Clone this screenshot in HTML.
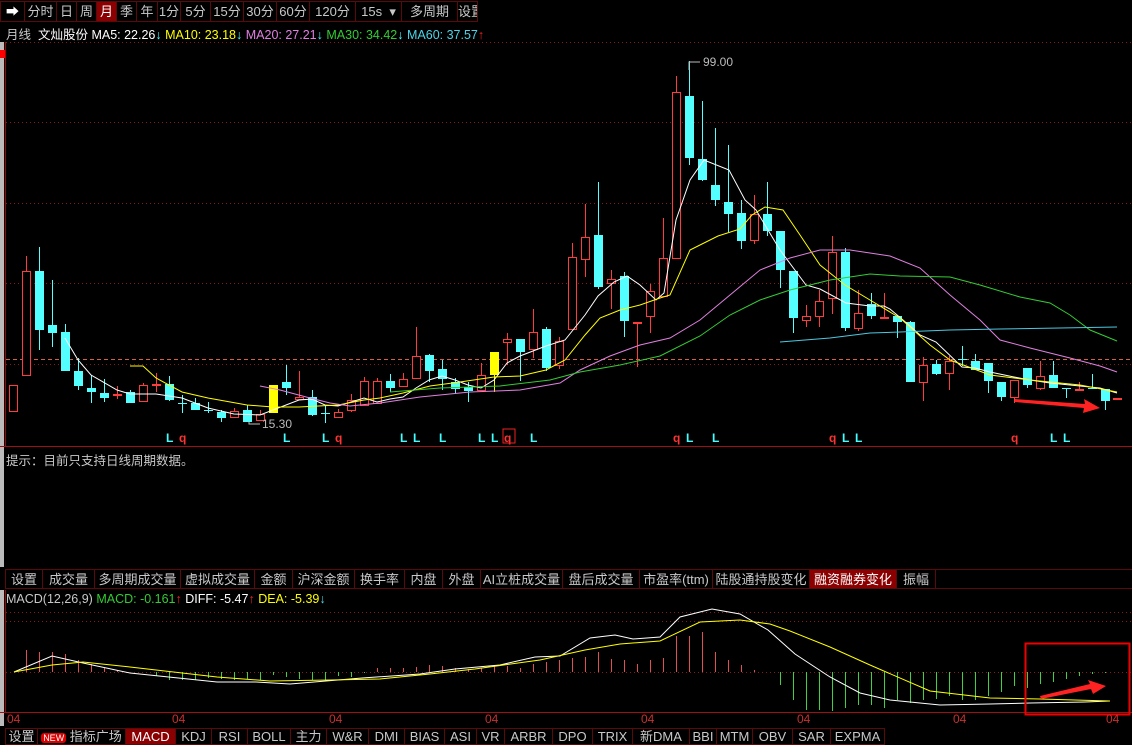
<!DOCTYPE html>
<html><head><meta charset="utf-8">
<style>
*{margin:0;padding:0;box-sizing:border-box}
body{width:1132px;height:745px;background:#000;overflow:hidden;position:relative;font-family:"Liberation Sans","Noto Sans CJK SC",sans-serif;font-size:13px;color:#c8c8c8}
.bar{position:absolute;left:0;display:flex;height:20px;line-height:19px}
.bar div{border:1px solid #5a0a0a;border-left:none;text-align:center;white-space:nowrap;overflow:hidden}
.sel{background:#8b0000;color:#fff}
.t{position:absolute;white-space:nowrap}
svg{position:absolute;left:0;top:0}
</style></head><body>
<div class="bar" style="top:1px;height:21px;line-height:20px">
<div style="width:25px;border-left:1px solid #5a0a0a;color:#fff">➡</div><div style="width:32px">分时</div><div style="width:20px">日</div><div style="width:20px">周</div><div style="width:20px" class="sel">月</div><div style="width:20px">季</div><div style="width:21px">年</div><div style="width:23px">1分</div><div style="width:30px">5分</div><div style="width:33px">15分</div><div style="width:33px">30分</div><div style="width:33px">60分</div><div style="width:46px">120分</div><div style="width:46px">15s &nbsp;▾</div><div style="width:56px">多周期</div><div style="width:20px">设置</div>
</div>
<div class="t" style="top:24px;left:6px;font-size:12.5px">月线 <span style="color:#fff">&nbsp;文灿股份</span> <span style="color:#fff">MA5: 22.26</span><span style="color:#4ff">↓</span> <span style="color:#ff0">MA10: 23.18</span><span style="color:#4ff">↓</span> <span style="color:#e080e0">MA20: 27.21</span><span style="color:#4ff">↓</span> <span style="color:#3c3">MA30: 34.42</span><span style="color:#4ff">↓</span> <span style="color:#4cd4e8">MA60: 37.57</span><span style="color:#e22">↑</span></div>
<div class="t" style="top:450px;left:6px;font-size:12.5px">提示：目前只支持日线周期数据。</div>
<div class="bar" style="top:569px">
<div style="width:38px;margin-left:5px;border-left:1px solid #5a0a0a">设置</div><div style="width:52px">成交量</div><div style="width:86px">多周期成交量</div><div style="width:74px">虚拟成交量</div><div style="width:38px">金额</div><div style="width:62px">沪深金额</div><div style="width:50px">换手率</div><div style="width:38px">内盘</div><div style="width:38px">外盘</div><div style="width:82px">AI立桩成交量</div><div style="width:77px">盘后成交量</div><div style="width:73px">市盈率(ttm)</div><div style="width:97px">陆股通持股变化</div><div style="width:87px" class="sel">融资融券变化</div><div style="width:39px">振幅</div><div style="width:196px;border-right:none"></div>
</div>
<div class="t" style="top:592px;left:6px;font-size:12.5px">MACD(12,26,9) <span style="color:#3c3">MACD: -0.161</span><span style="color:#e22">↑</span> <span style="color:#fff">DIFF: -5.47</span><span style="color:#e22">↑</span> <span style="color:#ff0">DEA: -5.39</span><span style="color:#4cd4e8">↓</span></div>
<div class="bar" style="top:728px;height:17px;line-height:16px">
<div style="width:33px;margin-left:5px;border-left:1px solid #5a0a0a">设置</div><div style="width:88px"><span style="background:#d00;color:#fff;font-size:9px;padding:0 2px;border-radius:3px">NEW</span> 指标广场</div><div style="width:50px" class="sel">MACD</div><div style="width:36px">KDJ</div><div style="width:36px">RSI</div><div style="width:43px">BOLL</div><div style="width:36px">主力</div><div style="width:42px">W&amp;R</div><div style="width:36px">DMI</div><div style="width:40px">BIAS</div><div style="width:32px">ASI</div><div style="width:28px">VR</div><div style="width:48px">ARBR</div><div style="width:40px">DPO</div><div style="width:40px">TRIX</div><div style="width:57px">新DMA</div><div style="width:27px">BBI</div><div style="width:36px">MTM</div><div style="width:40px">OBV</div><div style="width:38px">SAR</div><div style="width:54px">EXPMA</div>
</div>
<svg width="1132" height="745" id="s">
<rect x="0" y="42" width="4" height="525" fill="#bbb"/>
<rect x="0" y="590" width="4" height="136" fill="#bbb"/>
<line x1="5.5" y1="42" x2="5.5" y2="447" stroke="#a00"/>
<line x1="5.5" y1="590" x2="5.5" y2="712" stroke="#a00"/>
<rect x="0" y="50" width="5" height="8" fill="#f00"/>
<g stroke="#8b1a1a" stroke-dasharray="1,3">
<line x1="6" y1="42.5" x2="1132" y2="42.5"/><line x1="6" y1="122.5" x2="1132" y2="122.5"/><line x1="6" y1="203.5" x2="1132" y2="203.5"/><line x1="6" y1="283.5" x2="1132" y2="283.5"/><line x1="6" y1="364.5" x2="1132" y2="364.5"/>
<line x1="6" y1="612.5" x2="1132" y2="612.5"/><line x1="6" y1="621.5" x2="1132" y2="621.5"/>
</g>
<line x1="6" y1="359.5" x2="1132" y2="359.5" stroke="#d86040" stroke-dasharray="4,3"/>
<line x1="6" y1="672.5" x2="1132" y2="672.5" stroke="#8b1a1a" stroke-dasharray="1,3"/>
<line x1="0" y1="446.5" x2="1132" y2="446.5" stroke="#a01010"/>
<line x1="0" y1="712.5" x2="1132" y2="712.5" stroke="#a01010"/>
<g id="cd"></g>
<g fill="none" stroke-width="1">
<polyline stroke="#fff" points="65,338 78,360 91,375 117,390 130,394 156,394 182,398 208,408 234,414 260,415 273,410 299,400 312,399 325,405 338,406 351,402 364,398 377,402 390,399 403,397 416,388 429,380 442,376 455,380 468,385 481,388 494,380 507,363 520,356 546,346 565,340 585,315 598,296 614,282 627,276 640,285 656,300 664,293 676,220 690,180 704,160 729,170 745,200 756,210 780,250 806,285 820,289 846,303 870,306 884,306 890,309 903,320 920,335 936,342 962,367 975,368 990,372 1014,377 1030,380 1050,383 1080,386 1100,388 1117,393"/>
<polyline stroke="#ff0" points="130,366 143,366 156,378 182,392 208,398 247,405 273,407 299,407 338,405 364,400 380,398 403,393 430,386 460,382 494,377 520,376 546,370 565,360 585,335 600,318 620,310 640,305 660,298 670,295 690,250 700,245 718,236 740,229 752,215 765,207 783,210 800,235 820,265 845,285 870,300 900,318 930,345 950,360 990,375 1030,380 1080,385 1117,392"/>
<polyline stroke="#e080e0" points="260,386 280,390 310,398 330,403 350,406 380,403 420,397 470,392 520,390 560,383 580,370 610,356 640,345 670,338 700,320 730,295 760,270 790,258 820,250 850,250 890,256 920,268 950,295 980,320 1000,340 1030,348 1070,358 1100,366 1117,372"/>
<polyline stroke="#3c3" points="390,392 440,388 500,386 550,380 580,372 620,365 660,356 700,336 730,315 760,300 790,290 830,280 870,274 900,276 950,277 980,285 1020,297 1050,303 1070,315 1090,330 1117,341"/>
<polyline stroke="#4cc8e0" points="780,342 830,338 870,333 900,332 950,330 1000,329 1060,328 1117,327"/>
</g>
<g fill="#bbb" font-size="12" font-family="Liberation Sans,sans-serif">
<polyline points="689,70 689,62 700,62" stroke="#bbb" fill="none"/><text x="703" y="66">99.00</text>
<polyline points="249,422 249,424 260,424" stroke="#bbb" fill="none"/><text x="262" y="428">15.30</text>
</g>
<g font-size="12" font-weight="bold" font-family="Liberation Sans,sans-serif" id="lq"></g>
<rect x="503" y="429" width="12" height="14" fill="none" stroke="#e22"/>
<polygon points="1015,399 1085,404 1084,399 1100,408 1083,413 1084,408 1015,402" fill="#f22"/>
<g id="hist"></g>
<polyline fill="none" stroke="#fff" points="14,672 52,656 83,663 130,673 217,682 256,682 290,684 362,678 420,674 455,669 500,665 535,657 560,656 590,638 615,635 633,639 660,637 680,617 712,609 740,614 768,630 795,654 830,677 860,693 890,700 940,705 990,704 1030,703 1085,702 1110,701"/>
<polyline fill="none" stroke="#ff0" points="14,672 52,665 83,662 130,667 217,677 270,681 330,680 380,679 430,674 475,669 540,660 585,650 620,644 660,641 700,622 740,620 770,624 790,631 830,647 870,665 930,691 990,698 1040,699 1110,701"/>
<polygon points="1040,696 1090,684 1088,680 1106,686 1093,694 1091,689 1041,699" fill="#f22"/>
<rect x="1025.5" y="643.5" width="104" height="71" fill="none" stroke="#e00" stroke-width="2"/>
<g fill="#c83030" font-size="12" font-family="Liberation Sans,sans-serif">
<text x="7" y="723">04</text><text x="172" y="723">04</text><text x="329" y="723">04</text><text x="485" y="723">04</text><text x="641" y="723">04</text><text x="797" y="723">04</text><text x="953" y="723">04</text><text x="1106" y="723">04</text>
</g>
</svg>
<script>
var C=[[13,'r',385,411,385,411],[26,'r',271,375,256,375],[39,'c',271,330,247,350],[52,'c',325,333,280,347],[65,'c',332,371,324,371],[78,'c',371,386,358,390],[91,'c',388,392,375,403],[104,'c',393,398,379,402],[117,'r',394,395,386,399],[130,'c',392,403,390,403],[143,'r',385,401,383,401],[156,'r',384,385,373,392],[169,'c',384,400,376,401],[182,'c',403,404,395,413],[195,'c',403,410,398,410],[208,'c',410,411,402,413],[221,'c',412,418,410,422],[234,'r',411,417,408,417],[247,'c',410,422,405,422],[260,'r',414,420,410,420],[273,'y',385,413,385,413],[286,'c',382,388,365,395],[299,'r',397,399,371,399],[312,'c',397,415,390,416],[325,'c',413,414,406,423],[338,'r',412,417,409,417],[351,'r',400,410,394,412],[364,'r',381,405,377,405],[377,'r',381,403,378,403],[390,'c',381,388,374,392],[403,'r',379,386,373,386],[416,'r',356,378,327,378],[429,'c',355,371,354,382],[442,'c',369,379,360,390],[455,'c',382,389,378,394],[468,'c',387,391,382,402],[481,'r',375,390,363,390],[494,'y',352,375,352,392],[507,'r',339,342,333,365],[520,'c',339,352,339,381],[533,'r',332,349,309,358],[546,'c',329,368,327,371],[559,'r',341,365,337,369],[572,'r',257,329,243,329],[585,'r',237,259,204,277],[598,'c',235,287,182,289],[611,'r',279,283,270,309],[624,'c',276,321,272,337],[637,'r',322,323,322,367],[650,'r',291,316,284,333],[663,'r',258,296,218,296],[676,'r',92,258,76,258],[689,'c',96,158,61,165],[702,'c',159,180,101,181],[715,'c',185,200,128,206],[728,'c',202,214,145,232],[741,'c',213,241,200,249],[754,'r',214,240,195,244],[767,'c',214,231,182,236],[780,'c',231,270,231,288],[793,'c',271,318,271,333],[806,'r',316,320,305,327],[819,'r',301,316,290,327],[832,'r',252,298,236,314],[845,'c',252,328,248,331],[858,'r',313,328,290,331],[871,'c',304,316,293,319],[884,'r',317,318,293,318],[897,'c',316,322,315,338],[910,'c',322,382,321,382],[923,'r',365,382,357,401],[936,'c',364,374,360,375],[949,'r',361,373,356,390],[962,'c',359,360,346,366],[975,'c',361,370,354,370],[988,'c',363,381,363,393],[1001,'c',382,397,382,401],[1014,'r',380,397,380,403],[1027,'c',368,385,368,388],[1040,'r',376,388,361,390],[1053,'c',375,388,361,388],[1066,'c',388,389,388,398],[1079,'r',389,390,382,390],[1092,'c',388,389,374,389],[1105,'c',389,401,389,410],[1117,'r',398,399,398,399]];
var h='';C.forEach(function(c){var x=c[0],col=c[1]=='r'?'#ff3c3c':(c[1]=='y'?'#ff0':'#54ffff');
h+='<line x1="'+(x+.5)+'" y1="'+c[4]+'" x2="'+(x+.5)+'" y2="'+c[5]+'" stroke="'+col+'"/>';
var hh=Math.max(1,c[3]-c[2]);
if(c[1]=='r')h+='<rect x="'+(x-3.5)+'" y="'+(c[2]+.5)+'" width="8" height="'+hh+'" fill="#000" stroke="'+col+'"/>';
else h+='<rect x="'+(x-4)+'" y="'+c[2]+'" width="9" height="'+hh+'" fill="'+col+'"/>';});
document.getElementById('cd').innerHTML=h;
var L=[[169,'L'],[182,'q'],[286,'L'],[325,'L'],[338,'q'],[403,'L'],[416,'L'],[442,'L'],[481,'L'],[494,'L'],[507,'q'],[533,'L'],[676,'q'],[689,'L'],[715,'L'],[832,'q'],[845,'L'],[858,'L'],[1014,'q'],[1053,'L'],[1066,'L']];
h='';L.forEach(function(l){h+='<text x="'+(l[0]-3)+'" y="442" fill="'+(l[1]=='q'?'#f33':'#4ff')+'">'+l[1]+'</text>';});
document.getElementById('lq').innerHTML=h;
var H=[[26,650],[39,652],[52,652],[65,654],[78,660],[91,664],[104,668],[117,670],[156,676],[169,680],[182,680],[195,680],[208,678],[221,679],[234,680],[247,679],[260,680],[273,675],[286,677],[299,679],[312,680],[325,680],[338,676],[351,677],[364,673],[377,668],[390,668],[403,668],[416,667],[429,665],[442,666],[455,668],[468,669],[481,668],[494,666],[507,666],[520,668],[533,664],[546,662],[559,660],[572,658],[585,657],[598,652],[611,659],[624,660],[637,664],[650,660],[663,658],[676,636],[689,636],[702,632],[715,652],[728,660],[741,665],[754,670],[780,685],[793,700],[806,710],[819,710],[832,711],[845,708],[858,705],[871,705],[884,708],[897,700],[910,703],[923,700],[936,699],[949,696],[962,700],[975,700],[988,696],[1001,692],[1014,686],[1027,688],[1040,684],[1053,682],[1066,679],[1079,676],[1092,674],[1105,673]];
h='';H.forEach(function(b){var y=b[1];h+='<line x1="'+(b[0]+.5)+'" y1="672" x2="'+(b[0]+.5)+'" y2="'+y+'" stroke="'+(y<672?'#e05050':'#40d040')+'"/>';});
document.getElementById('hist').innerHTML=h;
</script>
</body></html>
